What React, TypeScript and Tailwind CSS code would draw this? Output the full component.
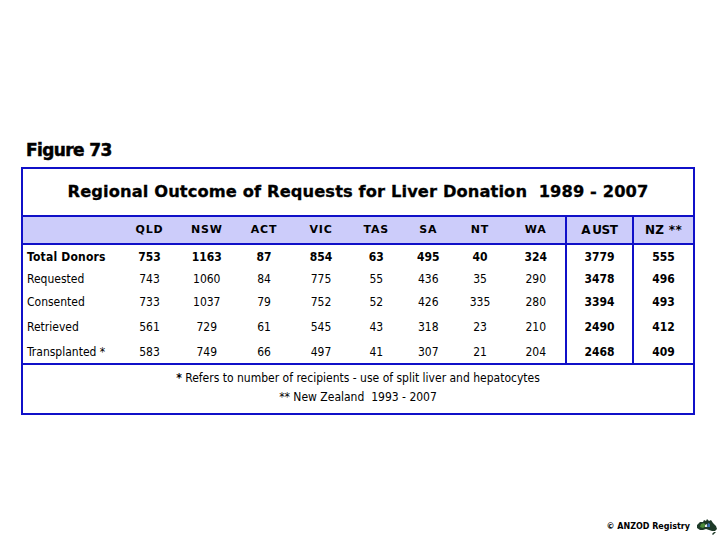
import React from "react";

const cols = ["QLD", "NSW", "ACT", "VIC", "TAS", "SA", "NT", "WA"];
const colW = ["w-[57px]", "w-[57.5px]", "w-[57px]", "w-[57px]", "w-[53.5px]", "w-[50.5px]", "w-[53px]", "w-[58.5px]"];

interface Row {
  label: string;
  values: number[];
  aust: number;
  nz: number;
  bold?: boolean;
  h: string;
}

const rows: Row[] = [
  { label: "Total Donors", values: [753, 1163, 87, 854, 63, 495, 40, 324], aust: 3779, nz: 555, bold: true, h: "h-[23px]" },
  { label: "Requested", values: [743, 1060, 84, 775, 55, 436, 35, 290], aust: 3478, nz: 496, h: "h-[22px]" },
  { label: "Consented", values: [733, 1037, 79, 752, 52, 426, 335, 280], aust: 3394, nz: 493, h: "h-[24px]" },
  { label: "Retrieved", values: [561, 729, 61, 545, 43, 318, 23, 210], aust: 2490, nz: 412, h: "h-[26px]" },
  { label: "Transplanted *", values: [583, 749, 66, 497, 41, 307, 21, 204], aust: 2468, nz: 409, h: "h-[23px]" },
];

const cond = { fontFamily: '"DejaVu Sans Condensed", "DejaVu Sans", sans-serif', fontStretch: "condensed" as const };

function AusMap() {
  return (
    <svg width="25" height="18" viewBox="0 0 25 18">
      <path
        d="M2 7 L5 4 L8 4 L9 2 L11 3 L12 1 L14 3 L16 2 L18 5 L21 8 L22 11 L20 13 L17 13 L14 12 L11 11 L8 12 L5 12 L2 10 Z"
        fill="#1e3a28"
      />
      <path d="M6 6 L9 5 L11 8 L8 10 L5 9 Z" fill="#4d8c3a" />
      <path d="M13 5 L15 6 L15 9 L12 9 Z" fill="#3a6fb0" />
      <path d="M10 7 L12 6 L12 9 L10 9 Z" fill="#e8e8e8" />
      <path d="M19 14 L21 14 L18 17 L17 16 Z" fill="#1e3a28" />
    </svg>
  );
}

export default function App() {
  return (
    <div
      className="w-[720px] h-[540px] bg-white flex flex-col text-black"
      style={{ fontFamily: '"DejaVu Sans", Verdana, sans-serif' }}
    >
      <div className="pt-[139px] pl-[26px] text-[17px] font-bold leading-[22px] tracking-[-0.6px] [-webkit-text-stroke:0.5px_black]">
        Figure 73
      </div>

      <div className="ml-[21px] mt-[6px] w-[674px] border-2 border-[#1010c8] flex flex-col">
        {/* title */}
        <div className="h-[46px] flex items-center justify-center text-[16.3px] font-bold whitespace-pre tracking-[0.1px] [-webkit-text-stroke:0.3px_black]">
          {"Regional Outcome of Requests for Liver Donation  1989 - 2007"}
        </div>

        {/* header */}
        <div className="h-[30px] flex bg-[#ccccfa] border-y-2 border-[#1010c8] text-[11px] font-bold tracking-[0.8px]">
          <div className="w-[98px]" />
          {cols.map((c, i) => (
            <div key={c} className={`${colW[i]} flex items-center justify-center`}>{c}</div>
          ))}
          <div className="w-[67px] flex items-center justify-center border-l-2 border-[#1010c8] text-[12px] tracking-[-0.4px]">
            <span className="mr-[2px]">A</span>UST
          </div>
          <div className="flex-1 flex items-center justify-center border-l-2 border-[#1010c8] text-[12px] tracking-[0.3px] whitespace-pre">{"NZ **"}</div>
        </div>

        {/* body */}
        <div className="flex flex-col text-[12px]" style={cond}>
          {rows.map(r => (
            <div key={r.label} className={`${r.h} flex items-center`}>
              <div className={`w-[98px] pl-[4px] h-full flex items-center ${r.bold ? "font-bold tracking-[0.2px]" : ""}`}>{r.label}</div>
              {r.values.map((v, i) => (
                <div key={i} className={`${colW[i]} h-full flex items-center justify-center ${r.bold ? "font-bold" : ""}`}>{v}</div>
              ))}
              <div className="w-[67px] h-full flex items-center justify-center border-l-2 border-[#1010c8] font-bold">{r.aust}</div>
              <div className="flex-1 h-full flex items-center justify-center border-l-2 border-[#1010c8] font-bold">{r.nz}</div>
            </div>
          ))}
        </div>

        {/* footnotes */}
        <div
          className="h-[50px] border-t-2 border-[#1010c8] flex flex-col items-center pt-[4px] text-[12px] leading-[19px]"
          style={cond}
        >
          <div><span className="font-bold">*</span> Refers to number of recipients - use of split liver and hepatocytes</div>
          <div className="whitespace-pre">{"** New Zealand  1993 - 2007"}</div>
        </div>
      </div>

      <div className="flex-1" />
      <div className="flex justify-end items-center h-[20px] mb-[3px] gap-[5px]">
        <div className="text-[8px] font-bold">© ANZOD Registry</div>
        <AusMap />
      </div>
    </div>
  );
}
